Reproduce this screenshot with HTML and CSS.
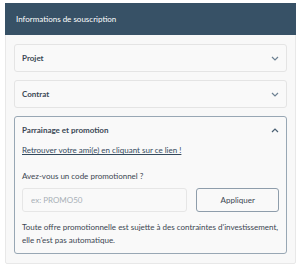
FILE: index.html
```html
<!DOCTYPE html>
<html lang="fr">
<head>
  <meta charset="UTF-8">
  <title>Informations de souscription</title>
  <link rel="stylesheet" href="styles.css">
</head>
<body>
  <div class="panel">
    <div class="panel-head">Informations de souscription</div>
    <div class="panel-body">
      <div class="acc">
        <div class="acc-head">
          <span>Projet</span>
          <svg class="chev" viewBox="0 0 8 5" fill="none" stroke="#6d8192" stroke-width="1.2"><path d="M1 1l3 3 3-3"/></svg>
        </div>
      </div>
      <div class="acc">
        <div class="acc-head">
          <span>Contrat</span>
          <svg class="chev" viewBox="0 0 8 5" fill="none" stroke="#6d8192" stroke-width="1.2"><path d="M1 1l3 3 3-3"/></svg>
        </div>
      </div>
      <div class="acc open">
        <div class="acc-head">
          <span>Parrainage et promotion</span>
          <svg class="chev" viewBox="0 0 8 5" fill="none" stroke="#4a6073" stroke-width="1.2"><path d="M1 4l3-3 3 3"/></svg>
        </div>
        <div class="acc-content">
          <a class="link" href="#">Retrouver votre ami(e) en cliquant sur ce lien !</a>
          <p class="question">Avez-vous un code promotionnel ?</p>
          <div class="promo-row">
            <input class="promo-input" type="text" placeholder="ex: PROMO50">
            <button class="promo-btn">Appliquer</button>
          </div>
          <p class="note">Toute offre promotionnelle est sujette à des contraintes d'investissement, elle n'est pas automatique.</p>
        </div>
      </div>
    </div>
  </div>
</body>
</html>
```

FILE: styles.css
```css
* { box-sizing: border-box; }
body {
  margin: 0;
  padding: 3px 4px 0 5px;
  background: #fff;
  font-family: Lato, 'Open Sans', sans-serif;
  font-size: 8px;
  color: #3b4651;
}
.panel {
  border: 1px solid #e8e8e8;
  border-radius: 2px;
  background: #f8f8f8;
}
.panel-head {
  background: #375166;
  color: #fff;
  height: 32px;
  margin: -1px -1px 0;
  padding: 0 11px;
  display: flex;
  align-items: center;
}
.panel-body {
  padding: 9px 8px 9px;
  display: flex;
  flex-direction: column;
  gap: 8px;
}
.acc {
  border: 1px solid #e4e4e4;
  border-radius: 3px;
  background: #f9f9f9;
}
.acc.open {
  border-color: #98a7b4;
}
.acc-head {
  height: 26px;
  padding: 0 7px;
  display: flex;
  align-items: center;
  justify-content: space-between;
  font-weight: bold;
  color: #3a4855;
}
.chev {
  width: 8px;
  height: 5px;
}
.acc-content {
  padding: 1px 7px 6px;
}
.link {
  display: block;
  color: #34495c;
  line-height: 13px;
  text-decoration: underline;
}
.question {
  margin: 13px 0 5px;
  line-height: 13px;
}
.promo-row {
  display: flex;
  gap: 9px;
}
.promo-input {
  width: 166px;
  height: 24px;
  border: 1px solid #e6e6e6;
  border-radius: 3px;
  background: #f9f9f9;
  padding: 0 8px;
  font-family: inherit;
  font-size: 8px;
  color: #3b4651;
}
.promo-input::placeholder {
  color: #a8b0b7;
}
.promo-btn {
  width: 83px;
  height: 24px;
  border: 1px solid #8e9dab;
  border-radius: 3px;
  background: #f9f9f9;
  font-family: inherit;
  font-size: 8px;
  color: #3b4651;
  padding: 0;
}
.note {
  margin: 9px 0 0;
  line-height: 13px;
}
```
